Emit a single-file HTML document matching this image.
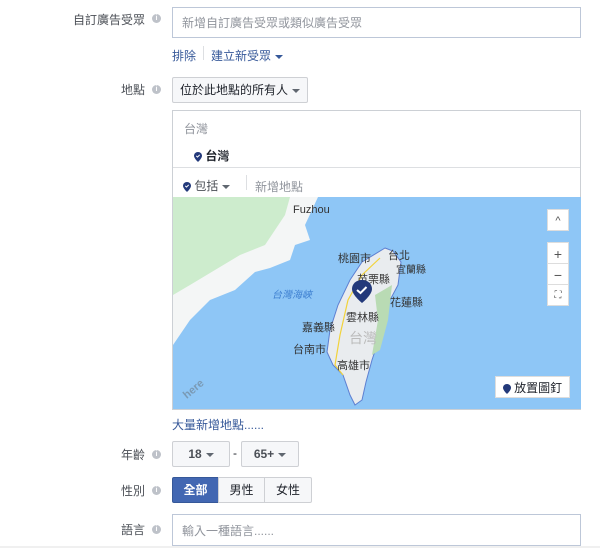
<!DOCTYPE html>
<html><head><meta charset="utf-8"><style>
body{margin:0;width:600px;height:548px;background:#fff;font-family:"Liberation Sans","Noto Sans CJK TC",sans-serif;font-size:12px;color:#1d2129;position:relative;overflow:hidden}
.a{position:absolute}
.lbl{position:absolute;right:455px;font-size:12px;color:#4b4f56;white-space:nowrap}
.i{position:absolute;left:152px;width:9px;height:9px;border-radius:50%;background:#bec2c9;color:#fff;font-size:7px;line-height:9px;text-align:center;font-weight:bold}
.inp{position:absolute;left:172px;width:409px;border:1px solid #bdc7d8;background:#fff;color:#90949c;box-sizing:border-box;padding-left:9px}
.btn{position:absolute;border:1px solid #ced0d4;background:#f6f7f9;box-sizing:border-box;border-radius:2px;text-align:center;font-weight:bold;color:#4b4f56}
.car{display:inline-block;width:0;height:0;border-left:4px solid transparent;border-right:4px solid transparent;border-top:4px solid #606770;vertical-align:middle;margin-left:4px}
.link{color:#365899}
.pin{display:inline-block;width:8px;height:10px;vertical-align:middle}
.mb{position:absolute;background:#fff;border:1px solid #ddd;box-sizing:border-box;text-align:center;color:#555;font-size:14px;line-height:22px}
</style></head><body>
<div class="lbl" style="top:11px">自訂廣告受眾</div><div class="i" style="top:14px">i</div>
<div class="inp" style="top:7px;height:31px;line-height:31px">新增自訂廣告受眾或類似廣告受眾</div>
<div class="a link" style="left:172px;top:47px">排除</div>
<div class="a" style="left:203px;top:46px;width:1px;height:14px;background:#dddfe2"></div>
<div class="a link" style="left:211px;top:47px">建立新受眾<span class="car" style="border-top-color:#365899"></span></div>

<div class="lbl" style="top:81px">地點</div><div class="i" style="top:85px">i</div>
<div class="btn" style="left:172px;top:77px;width:136px;height:26px;line-height:24px;font-weight:normal;color:#1d2129">位於此地點的所有人<span class="car"></span></div>

<div class="a" style="left:172px;top:110px;width:409px;height:300px;border:1px solid #ccd0d5;box-sizing:border-box"></div>
<div class="a" style="left:184px;top:120px;color:#90949c">台灣</div>
<div class="a" style="left:194px;top:147px;font-weight:bold"><svg class="pin" viewBox="0 0 8 10"><path d="M4 0C1.8 0 0 1.7 0 3.8 0 6.5 4 10 4 10S8 6.5 8 3.8C8 1.7 6.2 0 4 0z" fill="#23397a"/><path d="M2.3 3.9l1.2 1.2 2.2-2.2" stroke="#fff" fill="none" stroke-width="1"/></svg> 台灣</div>
<div class="a" style="left:173px;top:167px;width:407px;height:1px;background:#dddfe2"></div>
<div class="a" style="left:183px;top:177px;color:#4b4f56"><svg class="pin" viewBox="0 0 8 10"><path d="M4 0C1.8 0 0 1.7 0 3.8 0 6.5 4 10 4 10S8 6.5 8 3.8C8 1.7 6.2 0 4 0z" fill="#23397a"/><path d="M2.3 3.9l1.2 1.2 2.2-2.2" stroke="#fff" fill="none" stroke-width="1"/></svg> 包括<span class="car"></span></div>
<div class="a" style="left:246px;top:175px;width:1px;height:15px;background:#dddfe2"></div>
<div class="a" style="left:255px;top:178px;color:#90949c">新增地點</div>

<svg class="a" style="left:173px;top:197px" width="408" height="212" viewBox="173 197 408 212">
<rect x="173" y="197" width="408" height="212" fill="#8ec6f6"/>
<path d="M173 197H318L312 210 305 225 310 240 295 245 290 260 270 268 255 272 235 290 210 300 190 320 173 345Z" fill="#f4f6f6"/>
<path d="M173 197H290L285 215 275 230 265 245 240 255 215 270 190 285 173 295Z" fill="#cdeccd"/>
<path d="M385 248L393 251 401 262 398 285 390 300 382 330 372 360 366 382 362 400 355 405 350 395 343 375 333 365 327 352 330 330 338 305 350 280 362 262Z" fill="#e9ecef" stroke="#5d7fd1" stroke-width="1"/>
<path d="M375 295L392 285 388 320 380 350 372 355 378 320Z" fill="#b9dbb4"/>
<path d="M380 258L362 275 348 300 340 335 335 365 343 375" stroke="#f2d33a" fill="none" stroke-width="1.2"/>
<text x="293" y="213" font-size="11" fill="#333">Fuzhou</text>
<text x="338" y="262" font-size="11" fill="#333">桃園市</text><text x="388" y="259" font-size="11" fill="#333">台北</text>
<text x="357" y="283" font-size="11" fill="#333">苗栗縣</text><text x="396" y="273" font-size="10" fill="#333">宜蘭縣</text>
<text x="272" y="298" font-size="10" fill="#3d7fd0" font-style="italic">台灣海峽</text>
<text x="390" y="306" font-size="11" fill="#333">花蓮縣</text><text x="346" y="321" font-size="11" fill="#333">雲林縣</text>
<text x="302" y="331" font-size="11" fill="#333">嘉義縣</text><text x="293" y="353" font-size="11" fill="#333">台南市</text>
<text x="349" y="343" font-size="14" fill="#bbb">台灣</text><text x="337" y="369" font-size="11" fill="#333">高雄市</text>
<text x="182" y="398" font-size="11" fill="#7a9ab5" font-weight="bold" transform="rotate(-40 186 392)">here</text>
<path d="M362 280c-6 0-10 4-10 9 0 6 10 14 10 14s10-8 10-14c0-5-4-9-10-9z" fill="#23397a"/>
<path d="M357 290l3.5 3 6-6" stroke="#fff" stroke-width="2" fill="none"/>
</svg>
<div class="mb" style="left:547px;top:209px;width:22px;height:22px;font-size:11px">^</div>
<div class="mb" style="left:547px;top:242px;width:22px;height:22px">+</div>
<div class="mb" style="left:547px;top:263px;width:22px;height:22px">−</div>
<div class="mb" style="left:547px;top:284px;width:22px;height:22px;font-size:10px">⛶</div>
<div class="mb" style="left:495px;top:376px;width:75px;height:22px;font-size:12px;color:#1d2129"><svg class="pin" viewBox="0 0 8 10"><path d="M4 0C1.8 0 0 1.7 0 3.8 0 6.5 4 10 4 10S8 6.5 8 3.8C8 1.7 6.2 0 4 0z" fill="#23397a"/></svg> 放置圖釘</div>

<div class="a link" style="left:172px;top:416px">大量新增地點......</div>
<div class="lbl" style="top:446px">年齡</div><div class="i" style="top:450px">i</div>
<div class="btn" style="left:172px;top:441px;width:58px;height:26px;line-height:24px">18<span class="car"></span></div>
<div class="a" style="left:233px;top:446px">-</div>
<div class="btn" style="left:241px;top:441px;width:58px;height:26px;line-height:24px">65+<span class="car"></span></div>
<div class="lbl" style="top:482px">性別</div><div class="i" style="top:486px">i</div>
<div class="btn" style="left:172px;top:477px;width:47px;height:26px;line-height:24px;background:#4267b2;border-color:#365899;color:#fff;border-radius:2px 0 0 2px">全部</div>
<div class="btn" style="left:218px;top:477px;width:47px;height:26px;line-height:24px;border-radius:0;font-weight:normal;color:#1d2129">男性</div>
<div class="btn" style="left:264px;top:477px;width:48px;height:26px;line-height:24px;border-radius:0 2px 2px 0;font-weight:normal;color:#1d2129">女性</div>
<div class="lbl" style="top:521px">語言</div><div class="i" style="top:525px">i</div>
<div class="inp" style="top:514px;height:32px;line-height:32px">輸入一種語言......</div>
<div class="a" style="left:0;top:546px;width:600px;height:2px;background:#f0f0f0"></div>
</body></html>
